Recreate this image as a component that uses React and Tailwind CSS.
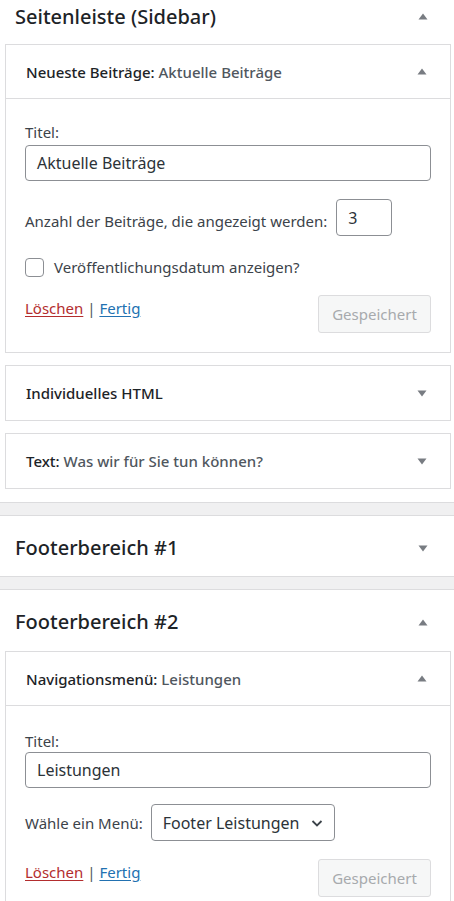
import React from "react";

const font = { fontFamily: '"Noto Sans", "Open Sans", sans-serif' };

function Arrow({ up }) {
  return (
    <svg width="10" height="7" viewBox="0 0 10 7" className="shrink-0">
      {up ? (
        <polygon points="5,0.5 9.5,6.5 0.5,6.5" fill="#787c82" />
      ) : (
        <polygon points="0.5,0.5 9.5,0.5 5,6.5" fill="#787c82" />
      )}
    </svg>
  );
}

function CardHeader({ title, sub, up, border }) {
  return (
    <div
      className={`flex items-center justify-between h-[54px] pl-[20px] pr-[23px] ${
        border ? "border-b border-[#dcdcde]" : ""
      }`}
    >
      <div className="text-[15px] font-medium text-[#1d2327] leading-5">
        {title}
        {sub ? <span className="text-[#50575e]">{sub}</span> : null}
      </div>
      <Arrow up={up} />
    </div>
  );
}

function Actions() {
  return (
    <div className="flex items-center justify-between">
      <div className="text-[15px] text-[#50575e] leading-5 -mt-[12px]">
        <a className="text-[#b32d2e] underline underline-offset-2">Löschen</a>
        <span> | </span>
        <a className="text-[#2271b1] underline underline-offset-2">Fertig</a>
      </div>
      <button className="h-[38px] w-[113px] rounded-[3px] border border-[#dcdcde] bg-[#f6f7f7] text-[15px] text-[#a7aaad]">
        Gespeichert
      </button>
    </div>
  );
}

export default function App() {
  return (
    <div style={font} className="w-[454px] bg-white text-[#1d2327]">
      {/* Section 1 */}
      <div className="pb-[13px]">
        <div className="flex items-center justify-between h-[33px] pl-[15px] pr-[26px]">
          <h2 className="text-[20px] font-medium leading-[30px] text-[#1d2327]">
            Seitenleiste (Sidebar)
          </h2>
          <Arrow up />
        </div>
        <div className="mt-[11px] ml-[5px] mr-[3px] border border-[#dcdcde] bg-white">
          <CardHeader title="Neueste Beiträge: " sub="Aktuelle Beiträge" up border />
          <div className="px-[19px] pt-[23px] pb-[19px]">
            <div className="text-[15px] leading-5 text-[#3c434a]">Titel:</div>
            <div className="mt-[3px] h-[36px] rounded-[4px] border border-[#8c8f94] px-[11px] flex items-center text-[16px] text-[#2c3338]">
              Aktuelle Beiträge
            </div>
            <div className="mt-[18px] flex items-start gap-[9px] h-[37px]">
              <span className="pt-[12px] text-[15px] leading-5 text-[#3c434a]">
                Anzahl der Beiträge, die angezeigt werden:
              </span>
              <div className="h-[37px] w-[56px] rounded-[4px] border border-[#8c8f94] px-[11px] flex items-center text-[16px] text-[#2c3338]">
                3
              </div>
            </div>
            <div className="mt-[21px] flex items-center gap-[10px] h-[20px]">
              <div className="h-[19px] w-[19px] rounded-[4px] border border-[#8c8f94] bg-white" />
              <span className="text-[15px] leading-5 text-[#3c434a]">
                Veröffentlichungsdatum anzeigen?
              </span>
            </div>
            <div className="mt-[18px]">
              <Actions />
            </div>
          </div>
        </div>
        <div className="mt-[12px] ml-[5px] mr-[3px] border border-[#dcdcde]">
          <CardHeader title="Individuelles HTML" />
        </div>
        <div className="mt-[12px] ml-[5px] mr-[3px] border border-[#dcdcde]">
          <CardHeader title="Text: " sub="Was wir für Sie tun können?" />
        </div>
      </div>

      <div className="h-[14px] border-y border-[#dcdcde] bg-[#f0f0f1]" />

      {/* Section 2 */}
      <div className="flex items-center justify-between h-[60px] pl-[15px] pr-[26px] pt-[4px]">
        <h2 className="text-[20px] font-medium leading-[30px]">Footerbereich #1</h2>
        <Arrow />
      </div>

      <div className="h-[14px] border-y border-[#dcdcde] bg-[#f0f0f1]" />

      {/* Section 3 */}
      <div>
        <div className="flex items-center justify-between h-[61px] pl-[15px] pr-[26px] pt-[3px]">
          <h2 className="text-[20px] font-medium leading-[30px]">Footerbereich #2</h2>
          <Arrow up />
        </div>
        <div className="ml-[5px] mr-[3px] border border-[#dcdcde]">
          <CardHeader title="Navigationsmenü: " sub="Leistungen" up border />
          <div className="px-[19px] pt-[25px] pb-[19px]">
            <div className="text-[15px] leading-5 text-[#3c434a]">Titel:</div>
            <div className="mt-[1px] h-[36px] rounded-[4px] border border-[#8c8f94] px-[11px] flex items-center text-[16px] text-[#2c3338]">
              Leistungen
            </div>
            <div className="mt-[16px] flex items-center gap-[8px]">
              <span className="text-[15px] leading-5 text-[#3c434a]">Wähle ein Menü:</span>
              <div className="h-[37px] w-[184px] rounded-[4px] border border-[#8c8f94] pl-[11px] pr-[10px] flex items-center justify-between text-[16px] text-[#2c3338]">
                <span>Footer Leistungen</span>
                <svg width="14" height="14" viewBox="0 0 14 14">
                  <polyline points="2.5,5 7,9.5 11.5,5" fill="none" stroke="#3c434a" strokeWidth="1.8" />
                </svg>
              </div>
            </div>
            <div className="mt-[18px]">
              <Actions />
            </div>
          </div>
        </div>
      </div>
    </div>
  );
}
